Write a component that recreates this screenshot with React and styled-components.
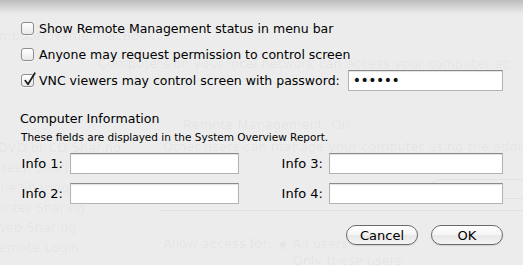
import React from 'react'
import styled, { createGlobalStyle } from 'styled-components'

const GlobalStyle = createGlobalStyle`
  html, body {
    margin: 0;
    padding: 0;
    background: #ececec;
  }
  body {
    font-family: "DejaVu Sans", "Liberation Sans", sans-serif;
    -webkit-font-smoothing: antialiased;
  }
`

const Sheet = styled.div`
  position: relative;
  width: 523px;
  height: 265px;
  overflow: hidden;
  background: #ececec;
  box-sizing: border-box;
  padding: 15px 20px 0 20px;
  display: flex;
  flex-direction: column;
  &::before {
    content: '';
    position: absolute;
    left: 0;
    right: 0;
    top: 0;
    height: 14px;
    background: linear-gradient(rgba(0, 0, 0, 0.2), rgba(0, 0, 0, 0));
    z-index: 2;
  }
`

// faint window behind the sheet, showing through
const Backdrop = styled.div`
  position: absolute;
  inset: 0;
  z-index: 0;
  color: rgba(0, 0, 0, 0.045);
  font-size: 13px;
  pointer-events: none;
`

const Ghost = styled.span`
  position: absolute;
  white-space: nowrap;
`

const GhostLine = styled.div`
  position: absolute;
  height: 1px;
  background: rgba(0, 0, 0, 0.045);
`

const GhostButton = styled.div`
  position: absolute;
  height: 18px;
  border: 1px solid rgba(0, 0, 0, 0.04);
  border-radius: 10px;
`

const Content = styled.div`
  position: relative;
  z-index: 1;
  display: flex;
  flex-direction: column;
  color: #000;
`

const CheckRow = styled.label`
  display: flex;
  align-items: center;
  height: 26px;
  font-size: 12.5px;
`

const Box = styled.span`
  position: relative;
  width: 13px;
  height: 13px;
  box-sizing: border-box;
  margin: 0 5px 0 1px;
  border: 1px solid #8d8d8d;
  border-radius: 3px;
  background: linear-gradient(#ffffff, #e9e9e9);
  box-shadow: 0 1px 0 rgba(255, 255, 255, 0.6);
  flex: none;
  svg {
    position: absolute;
    left: 1px;
    top: -3px;
  }
`

const TextField = styled.div`
  box-sizing: border-box;
  width: ${p => p.$w}px;
  height: 21px;
  background: #fff;
  border: 1px solid #b4b4b4;
  border-top-color: #8a8a8a;
  box-shadow: inset 0 1px 1px rgba(0, 0, 0, 0.12);
  display: flex;
  align-items: center;
  padding-left: 4px;
`

const Dots = styled.span`
  font-size: 14px;
  line-height: 1;
  letter-spacing: -0.5px;
  color: #111;
`

const Password = styled.div`
  margin-left: 8px;
`

const SectionTitle = styled.div`
  margin-top: 18px;
  font-size: 12.6px;
  line-height: 16px;
`

const Note = styled.div`
  margin-top: 3px;
  padding-left: 1px;
  font-size: 10.5px;
  line-height: 14px;
`

const InfoGrid = styled.div`
  margin-top: 9px;
  display: grid;
  grid-template-columns: 50px 169px 90px 174px;
  grid-auto-rows: 21px;
  row-gap: 9px;
  align-items: center;
`

const InfoLabel = styled.span`
  text-align: right;
  padding-right: ${p => p.$gap}px;
  font-size: 13px;
  white-space: nowrap;
`

const Buttons = styled.div`
  margin-top: 21px;
  display: flex;
  justify-content: flex-end;
  gap: 13px;
`

const PillButton = styled.button`
  box-sizing: border-box;
  width: 72px;
  height: 20px;
  padding: 0;
  border: 1px solid #6a6a6a;
  border-radius: 10px;
  background: linear-gradient(#ffffff 0%, #f6f6f6 45%, #e8e8e8 55%, #f4f4f4 100%);
  box-shadow: 0 1px 1px rgba(0, 0, 0, 0.12);
  font-family: inherit;
  font-size: 13px;
  color: #000;
`

const CheckMark = () => (
  <svg width="14" height="15" viewBox="0 0 14 15">
    <path d="M2.2 8.6 L5 12.3 L11.8 1.2" fill="none" stroke="#1a1a1a" strokeWidth="1.7" strokeLinecap="round" strokeLinejoin="round" />
  </svg>
)

const Checkbox = ({ checked, children }) => (
  <CheckRow>
    <Box>{checked && <CheckMark />}</Box>
    {children}
  </CheckRow>
)

const ghostTexts = [
  { t: 'Computer Name:', x: -18, y: 28 },
  { t: 'MacBook', x: 96, y: 28 },
  { t: 'Computers on your local network can access your computer at:', x: 98, y: 56 },
  { t: 'Remote Management: On', x: 183, y: 117 },
  { t: 'Other users can manage your computer using the address', x: 163, y: 139 },
  { t: 'DVD or CD Sharing', x: -2, y: 140 },
  { t: 'Screen Sharing', x: -14, y: 160 },
  { t: 'File Sharing', x: -6, y: 180 },
  { t: 'Printer Sharing', x: -12, y: 200 },
  { t: 'Web Sharing', x: -6, y: 220 },
  { t: 'Remote Login', x: -10, y: 240 },
  { t: 'Allow access for:', x: 163, y: 236 },
  { t: '◉ All users', x: 277, y: 236 },
  { t: '○ Only these users:', x: 277, y: 253 },
  { t: 'Options…', x: 455, y: 182 }
]

export default function App() {
  return (
    <>
      <GlobalStyle />
      <Sheet>
        <Backdrop>
          {ghostTexts.map(g => (
            <Ghost key={g.t} style={{ left: g.x, top: g.y }}>{g.t}</Ghost>
          ))}
          <GhostLine style={{ left: 160, right: 0, top: 210 }} />
          <GhostButton style={{ left: 430, width: 110, top: 179 }} />
        </Backdrop>
        <Content>
          <Checkbox>Show Remote Management status in menu bar</Checkbox>
          <Checkbox>Anyone may request permission to control screen</Checkbox>
          <Checkbox checked>
            VNC viewers may control screen with password:
            <Password>
              <TextField $w={155}><Dots>••••••</Dots></TextField>
            </Password>
          </Checkbox>
          <SectionTitle>Computer Information</SectionTitle>
          <Note>These fields are displayed in the System Overview Report.</Note>
          <InfoGrid>
            <InfoLabel $gap={7}>Info 1:</InfoLabel>
            <TextField $w={169} />
            <InfoLabel $gap={6}>Info 3:</InfoLabel>
            <TextField $w={174} />
            <InfoLabel $gap={7}>Info 2:</InfoLabel>
            <TextField $w={169} />
            <InfoLabel $gap={6}>Info 4:</InfoLabel>
            <TextField $w={174} />
          </InfoGrid>
          <Buttons>
            <PillButton>Cancel</PillButton>
            <PillButton>OK</PillButton>
          </Buttons>
        </Content>
      </Sheet>
    </>
  )
}
